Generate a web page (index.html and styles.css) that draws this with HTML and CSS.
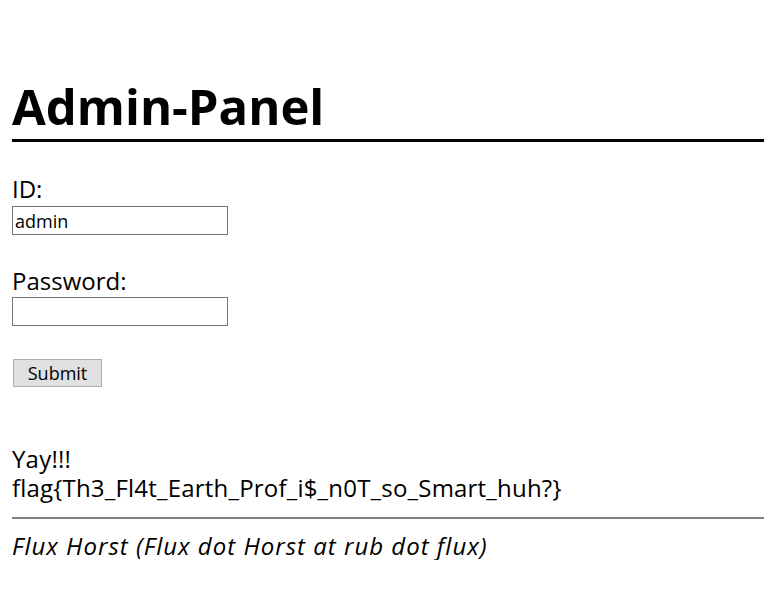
FILE: index.html
```html
<!DOCTYPE html>
<html>
<head>
<meta charset="utf-8">
<title>Admin-Panel</title>
<link rel="stylesheet" href="styles.css">
</head>
<body>
<h1 class="title">Admin-Panel</h1>
<form class="login">
  <label class="field-label" for="id">ID:</label>
  <input class="field" id="id" type="text" value="admin">
  <label class="field-label gap" for="pw">Password:</label>
  <input class="field flush" id="pw" type="password">
  <button class="submit" type="button">Submit</button>
</form>
<p class="result">Yay!!!<br>flag{Th3_Fl4t_Earth_Prof_i$_n0T_so_Smart_huh?}</p>
<hr class="rule">
<p class="footer">Flux Horst (Flux dot Horst at rub dot flux)</p>
</body>
</html>
```

FILE: styles.css
```css
html, body {
  margin: 0;
  background: #fff;
}
body {
  padding: 12px 0 0 12px;
  font-family: "Open Sans", "Noto Sans", sans-serif;
  color: #000;
}
.title {
  margin: 64px 0 0;
  padding-bottom: 3px;
  font-size: 49px;
  line-height: 60px;
  font-weight: 700;
  border-bottom: 3px solid #000;
}
.login {
  margin-top: 31px;
  display: flex;
  flex-direction: column;
  align-items: flex-start;
}
.field-label {
  font-size: 24px;
  line-height: 32px;
  height: 32px;
}
.field-label.gap {
  margin-top: 30px;
}
.field {
  box-sizing: border-box;
  margin: 1px 0 0;
  width: 216px;
  height: 29px;
  border: 1px solid #767676;
  padding: 0 2px;
  font-family: "Open Sans", "Noto Sans", sans-serif;
  font-size: 18px;
  color: #000;
  background: #fff;
}
.field.flush {
  margin-top: 0;
}
.submit {
  margin: 33px 0 0 1px;
  box-sizing: border-box;
  width: 89px;
  height: 28px;
  padding: 0;
  border: 1px solid #adadad;
  background: #e1e1e1;
  font-family: "Open Sans", "Noto Sans", sans-serif;
  font-size: 18px;
  color: #000;
}
.result {
  margin: 58px 0 0;
  font-size: 24px;
  line-height: 28.5px;
  letter-spacing: 0.2px;
}
.rule {
  margin: 15px 0 0;
  height: 0;
  border: 0;
  border-top: 2px solid #808080;
}
.footer {
  margin: 13px 0 0;
  font-size: 24px;
  line-height: 28px;
  font-style: italic;
  letter-spacing: 1px;
}
```
